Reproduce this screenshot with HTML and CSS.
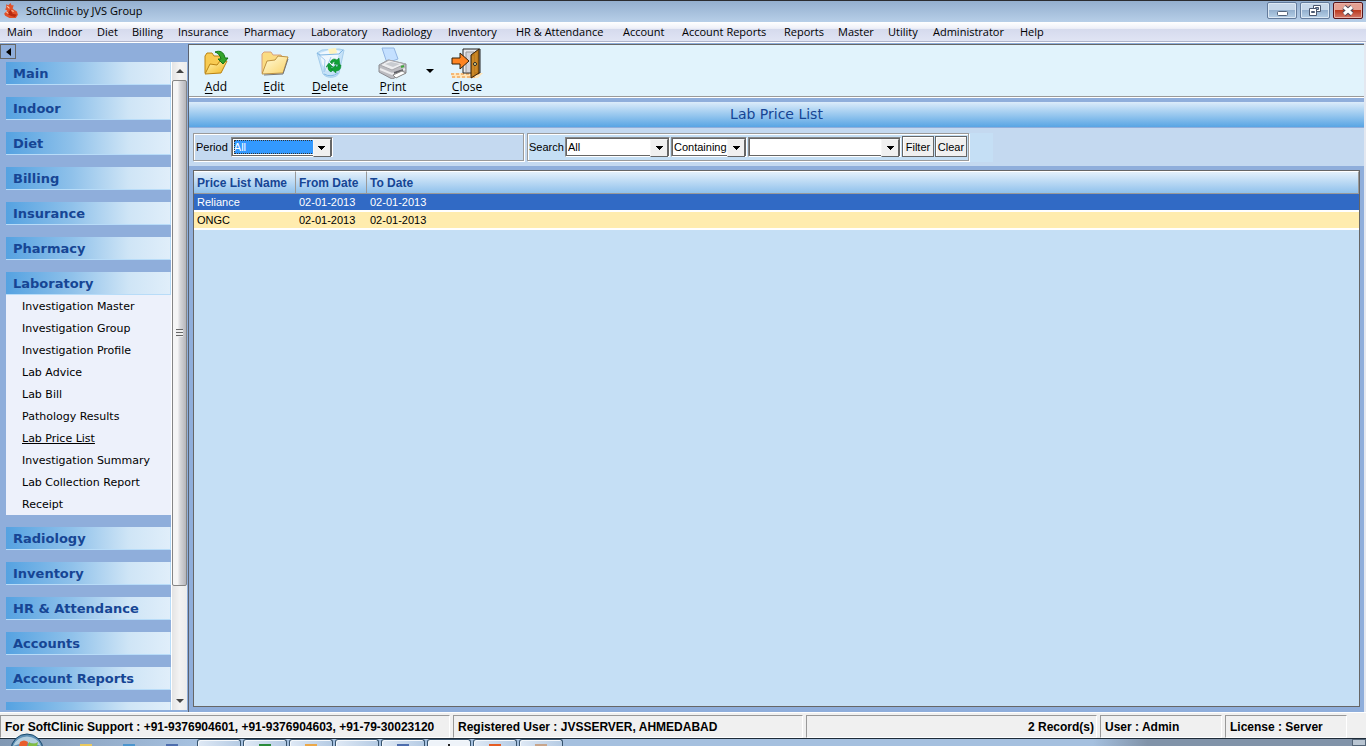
FILE: index.html
```html
<!DOCTYPE html>
<html lang="en">
<head>
<meta charset="utf-8">
<title>SoftClinic by JVS Group</title>
<link rel="stylesheet" href="styles.css">
</head>
<body>
<div class="app">
  <header class="titlebar">
    <svg class="logo" viewBox="0 0 16 16"><path d="M4 2l2 1 2-2 1 2 2 0-1 3 1 1 3 2 1 3-2 3-6 0-4-2-1-2 3-3-2-1 1-2z" fill="#e0512a"/><path d="M8 7l2 4 4 1-2 2-4-1-3-2z" fill="#b82a10"/><path d="M4 9l2 2M5 4l2 2M9 8l2 1" stroke="#ffc6a4" fill="none"/></svg>
    <span class="app-name">SoftClinic by JVS Group</span>
    <div class="window-buttons">
      <button class="win" aria-label="Minimize"><svg width="28" height="15" viewBox="0 0 28 15"><rect x="9.500" y="8.500" width="10" height="4" rx="1" fill="#fff" stroke="#53637a"/></svg></button>
      <button class="win" aria-label="Restore"><svg width="28" height="15" viewBox="0 0 28 15"><path d="M12.500 2.500h7v6h-7z" fill="#fff" stroke="#4b5870"/><path d="M14.500 4.500h3v2h-3z" fill="#8eabc8" stroke="#4b5870"/><path d="M8.500 5.500h7v7h-7z" fill="#fff" stroke="#4b5870"/><path d="M10.500 8.500h3v1h-3z" fill="#8eabc8" stroke="#4b5870"/></svg></button>
      <button class="win win-close" aria-label="Close window"><svg width="28" height="15" viewBox="0 0 28 15"><path d="M10 4l8 7M18 4l-8 7" stroke="#4b4555" stroke-width="5"/><path d="M10 4l8 7M18 4l-8 7" stroke="#fff" stroke-width="3"/></svg></button>
    </div>
  </header>
  <nav class="menubar">
    <button>Main</button><button>Indoor</button><button>Diet</button><button>Billing</button><button>Insurance</button><button>Pharmacy</button><button>Laboratory</button><button>Radiology</button><button>Inventory</button><button>HR &amp; Attendance</button><button>Account</button><button>Account Reports</button><button>Reports</button><button>Master</button><button>Utility</button><button>Administrator</button><button>Help</button>
  </nav>
  <div class="workspace">
    <aside class="sidebar">
      <button class="collapse" aria-label="Collapse sidebar"></button>
      <div class="side-body">
        <nav class="groups">
          <button class="group">Main</button>
          <button class="group">Indoor</button>
          <button class="group">Diet</button>
          <button class="group">Billing</button>
          <button class="group">Insurance</button>
          <button class="group">Pharmacy</button>
          <div class="open-group">
            <button class="group">Laboratory</button>
            <div class="links">
              <a href="#">Investigation Master</a>
              <a href="#">Investigation Group</a>
              <a href="#">Investigation Profile</a>
              <a href="#">Lab Advice</a>
              <a href="#">Lab Bill</a>
              <a href="#">Pathology Results</a>
              <a href="#" class="current">Lab Price List</a>
              <a href="#">Investigation Summary</a>
              <a href="#">Lab Collection Report</a>
              <a href="#">Receipt</a>
            </div>
          </div>
          <button class="group">Radiology</button>
          <button class="group">Inventory</button>
          <button class="group">HR &amp; Attendance</button>
          <button class="group">Accounts</button>
          <button class="group">Account Reports</button>
          <button class="group" aria-label="Reports"></button>
        </nav>
        <div class="scrollbar">
          <button class="scroll-up" aria-label="Scroll up"></button>
          <div class="thumb"><span class="grip"></span></div>
          <div class="track"></div>
          <button class="scroll-down" aria-label="Scroll down"></button>
        </div>
      </div>
    </aside>
    <main class="content">
      <div class="toolbar">
        <button class="tool add"><svg width="28" height="32" viewBox="0 0 28 32"><defs><linearGradient id="gold" x2="1" y2="1"><stop offset="0" stop-color="#fff6b5"/><stop offset="1" stop-color="#f2b520"/></linearGradient><linearGradient id="pale" x2="1" y2="1"><stop offset="0" stop-color="#fffde0"/><stop offset="1" stop-color="#fad267"/></linearGradient></defs><path d="M3 26V9l2-3h5l2 3h8v6" fill="#f8cb52" stroke="#b98212"/><path d="M3 27l5-10 7 1 3-4h7l-6 12z" fill="url(#gold)" stroke="#b98212"/><path d="M13 5c5-2 9 0 10 6h3l-5 6-5-5h3c-1-4-3-6-6-7z" fill="#32a52c" stroke="#157417"/></svg><span><u>A</u>dd</span></button>
        <button class="tool edit"><svg width="30" height="32" viewBox="0 0 30 32"><path d="M3 26V7l2-2h7l2 3h8l2 3v4z" fill="#fbdc82" stroke="#d8a07c"/><path d="M3 27l5-13 8-1 3-4 10 1-5 16z" fill="url(#pale)" stroke="#bd9242"/><path d="M5 28l19-1 5-15" stroke="#777" fill="none"/></svg><span><u>E</u>dit</span></button>
        <button class="tool delete"><svg width="30" height="32" viewBox="0 0 30 32"><path d="M2 6l5-3 17-1 5 1-5 23c-2 5-12 6-16 1z" fill="#c6e2f8" stroke="#a5cdec"/><path d="M5 6l12-4 8 2-4 12-9 8-5-7z" fill="#eff7fe"/><path d="M13 2l8-1 1 5-7 2z" fill="#fff3bd"/><path d="M3 7l7 6-1 12 4-8 3-7" fill="none" stroke="#a7cdf0"/><path d="M2 6l3 2 19-1 4-4M9 27q7 4 14-1" fill="none" stroke="#80b6e2"/><path d="M15 15q3-5 7-2l2-2 1 7-6-1 1-2q-2-1-3 2zM26 18q0 6-5 6v2l-5-4 5-4v2q2 0 2-2zM14 16l4 4h-2q0 2 2 3l-2 2q-4-2-3-6l-2 1z" fill="#12a035" stroke="#0b8430" stroke-width=".5"/></svg><span><u>D</u>elete</span></button>
        <button class="tool print"><svg width="30" height="32" viewBox="0 0 30 32"><path d="M4 1h12l4 11-11 4z" fill="#c4e0ff" stroke="#92b4e2"/><path d="M1 18l9-5 18 4v9l-14 6-13-7z" fill="#bcbcc1" stroke="#8b8b90"/><path d="M2 18l9-5 16 4-13 6z" fill="#eeeef0" stroke="#a7a7ac"/><path d="M7 17l6-2 9 2-7 3z" fill="#c8cbd0"/><path d="M2 22l12 5 13-5" stroke="#ececee" stroke-width="2" fill="none"/><path d="M16 26l9-3" stroke="#606068" stroke-width="2"/><path d="M15 28l9-4 4 2-10 5z" fill="#fff" stroke="#888"/><path d="M23 20l3-1" stroke="#3fa83b" stroke-width="2"/></svg><span><u>P</u>rint</span></button>
        <button class="tool-more" aria-label="Print options"></button>
        <button class="tool close"><svg width="34" height="32" viewBox="0 0 34 32"><path d="M1 26h32l-5 5H2z" fill="#ffe6bb"/><path d="M1 27h30M2 30h25" stroke="#f3b878" stroke-width="2" stroke-dasharray="3 2"/><path d="M13 26V2h17v24z" fill="#e9e9ed" stroke="#222"/><path d="M16 25V5h8v20" fill="#d4d4da" stroke="#999"/><path d="M21 31V8l8-6v24z" fill="#bf7c1c" stroke="#352009"/><path d="M23 28V9M26 25V6" stroke="#d69233"/><circle cx="25" cy="17" r="1.500" fill="#fff3a0" stroke="#222"/><path d="M2 11h8V6l9 8-9 8v-5H2z" fill="#ff8422" stroke="#352009"/></svg><span><u>C</u>lose</span></button>
      </div>
      <h1 class="page-title">Lab Price List</h1>
      <form class="filters">
        <div class="panel period">
          <label for="period">Period</label>
          <span class="combo combo-period"><select id="period"><option>All</option></select></span>
        </div>
        <div class="search-area">
          <div class="panel search">
            <label for="field">Search</label>
            <span class="combo combo-field"><select id="field"><option>All</option></select></span>
            <span class="combo combo-match"><select aria-label="Match type"><option>Containing</option></select></span>
            <span class="combo combo-text"><select aria-label="Search text"><option></option></select></span>
            <button type="button" class="btn">Filter</button>
            <button type="button" class="btn">Clear</button>
          </div>
        </div>
      </form>
      <div class="grid-frame">
        <table class="price-lists">
          <colgroup><col class="col-name"><col class="col-date"><col></colgroup>
          <thead><tr><th>Price List Name</th><th>From Date</th><th>To Date</th></tr></thead>
          <tbody>
            <tr class="selected"><td>Reliance</td><td>02-01-2013</td><td>02-01-2013</td></tr>
            <tr><td>ONGC</td><td>02-01-2013</td><td>02-01-2013</td></tr>
          </tbody>
        </table>
      </div>
    </main>
  </div>
  <footer class="statusbar">
    <div>For SoftClinic Support : +91-9376904601, +91-9376904603, +91-79-30023120</div>
    <div>Registered User : JVSSERVER, AHMEDABAD</div>
    <div class="records">2 Record(s)</div>
    <div>User : Admin</div>
    <div>License : Server</div>
  </footer>
  <div class="taskbar">
    <button class="start" aria-label="Start"><svg width="34" height="34" viewBox="0 0 34 34"><circle cx="17" cy="17" r="16" fill="#5e8fb4" stroke="#17496d"/><path d="M3 13a15 15 0 0 1 28 0q-14-6-28 0" fill="#b4cfdf"/><path d="M8 17l2-8q4-3 8 0l-2 8z" fill="#e95e2d"/><path d="M17 17l2-8q4 3 9 0l-2 8z" fill="#80bd43"/></svg></button>
    <div class="quick"><i class="yellow"></i><i class="blue"></i><i class="navy"></i></div>
    <div class="tasks"><button aria-label="Task 1"></button><button aria-label="Task 2"><i class="green"></i></button><button aria-label="Task 3"><i class="amber"></i></button><button aria-label="Task 4"></button><button aria-label="Task 5"><i class="navy"></i></button><button class="active" aria-label="SoftClinic"><i class="dark"></i></button><button aria-label="Task 7"><i class="orange"></i></button><button aria-label="Task 8"><i class="tan"></i></button></div>
    <button class="desktop" aria-label="Show desktop"></button>
  </div>
</div>
</body>
</html>
```

FILE: styles.css
```css
* { box-sizing: border-box; }
html, body { height: 100%; margin: 0; overflow: hidden; }
body { font: 11px/14px "Liberation Sans", Arial, sans-serif; color: #000; background: #8faedb; }
button { font: inherit; color: inherit; margin: 0; padding: 0; border: 0; background: none; }
.app { display: flex; flex-direction: column; height: 100vh; }

.titlebar { display: flex; flex: none; height: 22px; padding: 0 3px 0 2px; border-top: 1px solid #2b2c30; background: linear-gradient(#94afcf, #b7cfe8); font: 11px/20px "Open Sans", sans-serif; }
.logo { width: 17px; height: 17px; margin-top: 1px; }
.app-name { padding-left: 7px; }
.window-buttons { display: flex; gap: 3px; margin-left: auto; padding-top: 1px; }
.win { width: 30px; height: 17px; border: 1px solid #637b9b; border-radius: 2px; background: linear-gradient(#c6d7e9 48%, #95b1cf 50%, #b6d0e7); box-shadow: inset 0 0 0 1px #dce8f4; }
.win svg { display: block; }
.win-close { border-color: #59151a; background: linear-gradient(#e4a092 48%, #bd3b20 50%, #d4796b); box-shadow: inset 0 0 0 1px #e8b2a8; }

.menubar { display: grid; flex: none; grid-template-columns: 41px 49px 35px 46px 66px 67px 71px 66px 68px 107px 59px 102px 54px 50px 45px 87px 50px; height: 20px; padding-left: 7px; border-bottom: 1px solid #b0b5cb; background: linear-gradient(#fff, #eef0f8 34%, #d5daed 36%, #e0e4f4); font: 11px/18px "Open Sans", sans-serif; }
.menubar button { text-align: left; white-space: nowrap; }

.workspace { display: flex; flex: 1; min-height: 0; padding: 1px 0 0; border-top: 1px solid #fff; border-right: 2px solid #e4e8f0; }
.sidebar { display: flex; flex: none; flex-direction: column; width: 188px; }
.collapse { display: grid; flex: none; place-items: center; width: 16px; height: 15px; border: 1px solid #666; }
.collapse::before { content: ""; border: 4px solid transparent; border-right: 5px solid #000; border-left: 0; }
.side-body { display: flex; flex: 1; min-height: 0; margin: 3px 1px 2px 0; }
.groups { display: flex; flex: 1; flex-direction: column; gap: 12px; overflow: hidden; padding: 0 0 0 6px; }
.group { display: block; flex: none; width: 100%; height: 23px; padding-left: 7px; border-bottom: 1px solid #b8dcf8; border-right: 1px solid #b8dcf8; background: linear-gradient(90deg, #55a2e1, #8fc1ea 40%, #cfe5f6 75%, #e0eefa); color: #164594; font: bold 13px/22px Verdana, "DejaVu Sans", sans-serif; text-align: left; padding-top: 1px; }
.open-group { flex: none; }
.links { background: #edf1fb; font: 11px/22px Verdana, "DejaVu Sans", sans-serif; }
.links a { display: block; height: 22px; padding: 1px 0 0 16px; color: #000; text-decoration: none; }
.links .current { text-decoration: underline; }
.scrollbar { display: flex; flex: none; flex-direction: column; width: 16px; border-left: 1px solid #fff; background: linear-gradient(90deg, #e4e4e4, #f3f3f3 50%, #ececec); }
.scroll-up, .scroll-down { display: grid; flex: none; place-items: center; height: 18px; }
.scroll-up::before, .scroll-down::before { content: ""; border: 4px solid transparent; }
.scroll-up::before { border-top: 0; border-bottom-color: #444; }
.scroll-down::before { border-bottom: 0; border-top-color: #444; }
.thumb { display: grid; flex: 505; place-items: center; border: 1px solid #858585; border-radius: 2px; background: linear-gradient(90deg, #f5f5f5 35%, #d7d7da 55%, #b5b5bb); }
.track { flex: 106; }
.grip { width: 7px; height: 8px; background: repeating-linear-gradient(#666 0 1px, #eee 1px 3px); }

.content { display: flex; flex: 1; flex-direction: column; min-width: 0; border-top: 1px solid #666; border-left: 1px solid #5b6270; }
.toolbar { display: flex; flex: none; height: 53px; border-bottom: 1px solid #fff; box-shadow: inset 0 -1px #9a9a9a; background: #e1f3fc; font: 12px/14px "Open Sans", sans-serif; }
.tool { display: flex; flex-direction: column; align-items: center; padding-top: 2px; gap: 1px; }
.tool svg { display: block; }
.tool u { text-underline-offset: 2px; }
.add { width: 54px; }
.edit { width: 62px; }
.delete { width: 50px; }
.print { width: 56px; margin-left: 10px; }
.close { width: 56px; }
.tool-more { display: grid; place-items: center; width: 18px; }
.tool-more::before { content: ""; border: 4px solid transparent; border-top-color: #000; border-bottom: 0; }
.page-title { flex: none; height: 25px; margin: 4px 0 1px; background: linear-gradient(#dcecfa, #58a5e4); color: #164594; font: 14px/25px Verdana, "DejaVu Sans", sans-serif; text-align: center; }

.filters { display: flex; flex: none; gap: 3px; height: 38px; padding: 5px 4px 4px; background: #c4d9f0; }
.panel { display: flex; align-items: center; height: 28px; border: 1px solid #9a9a9a; box-shadow: inset 1px 1px #fff, 1px 1px #fff; }
.period { width: 331px; gap: 3px; padding-left: 2px; }
.search-area { padding-right: 24px; background: #c5dff5; }
.search { gap: 1px; padding: 0 1px 1px; }
.search label { width: 35px; }
.combo { position: relative; display: block; height: 20px; border: 1px solid; border-color: #888 #fff #fff #888; }
.combo select { display: block; width: 100%; height: 18px; padding: 0 17px 0 1px; border: 1px solid #666; border-radius: 0; appearance: none; background: #fff; color: #000; font: inherit; }
.combo::after { content: ""; position: absolute; top: 1px; right: 1px; width: 16px; height: 16px; border: 1px solid; border-color: #f6f6f6 #666 #666 #f6f6f6; background: linear-gradient(#000, #000) 50% 6px / 7px 1px no-repeat, linear-gradient(#000, #000) 50% 7px / 5px 1px no-repeat, linear-gradient(#000, #000) 50% 8px / 3px 1px no-repeat, linear-gradient(#000, #000) 50% 9px / 1px 1px no-repeat, #f0f0f0; pointer-events: none; }
.combo-period { width: 102px; }
.combo-period select { background: #3399ff; color: #fff; box-shadow: inset 0 0 0 1px #fff; outline: 1px dotted #333; outline-offset: -3px; }
.combo-field { width: 105px; }
.combo-match { width: 76px; }
.combo-text { width: 153px; }
.btn { width: 32px; height: 21px; border: 1px solid #666; box-shadow: inset 1px 1px #fff; background: #f0f0f0; }

.grid-frame { flex: 1; min-height: 0; margin: 4px 4px 5px; border: 1px solid #666; background: #c5dff5; }
.price-lists { width: 100%; table-layout: fixed; border-collapse: separate; border-spacing: 0; text-align: left; }
.col-name { width: 102px; }
.col-date { width: 71px; }
.price-lists th { height: 23px; padding: 0 3px; border-top: 1px solid #fff; border-bottom: 1px solid #999; border-right: 1px solid #999; background: linear-gradient(#e3f0fb, #90c1ec); color: #164594; font-size: 12px; white-space: nowrap; }
.price-lists td { height: 18px; padding: 0 3px; border-bottom: 2px solid #fff; background: #ffecae; }
.price-lists .selected td { background: #316ac5; color: #fff; }

.statusbar { display: grid; flex: none; grid-template-columns: 450px 350px 1fr 122px 122px; gap: 3px; height: 26px; padding: 2px 19px 0 0; border-top: 1px solid #fff; background: #f0f0f0; font: bold 12px/22px "Liberation Sans", Arial, sans-serif; }
.statusbar div { overflow: hidden; padding-left: 4px; border: 1px solid; border-color: #999 #fff #fff #999; white-space: nowrap; }
.statusbar .records { padding-right: 2px; text-align: right; }

.taskbar { position: relative; display: flex; flex: none; height: 8px; padding-left: 66px; border-top: 1px solid #1e2b38; background: linear-gradient(90deg, #8198b3, #a5c0df 14% 80%, #8193a9 84%); }
.start { position: absolute; left: 10px; top: -6px; }
.start svg { display: block; }
.quick { display: flex; gap: 31px; width: 131px; padding: 5px 0 0 14px; }
.taskbar i { display: block; width: 12px; height: 2px; }
.tasks { display: flex; gap: 2px; }
.tasks button { display: flex; justify-content: center; align-items: end; width: 44px; height: 7px; border: 1px solid #37536d; border-bottom: 0; border-radius: 3px 3px 0 0; background: linear-gradient(90deg, #dfe9f5, #b5cbe4); box-shadow: inset 1px 1px #f4f8fc; }
.tasks .active { background: #eef3f9; }
.yellow { background: #eac95e; }
.blue { background: #4b95ce; }
.navy { background: #4d6eae; }
.green { background: #2a8b3b; }
.amber { background: #eba849; }
.orange { background: #e55d25; }
.tan { background: #c8a58b; }
.taskbar .dark { width: 2px; background: #222; }
.desktop { width: 14px; margin-left: auto; border: 1px solid #526477; background: #b9c5d2; }
```
